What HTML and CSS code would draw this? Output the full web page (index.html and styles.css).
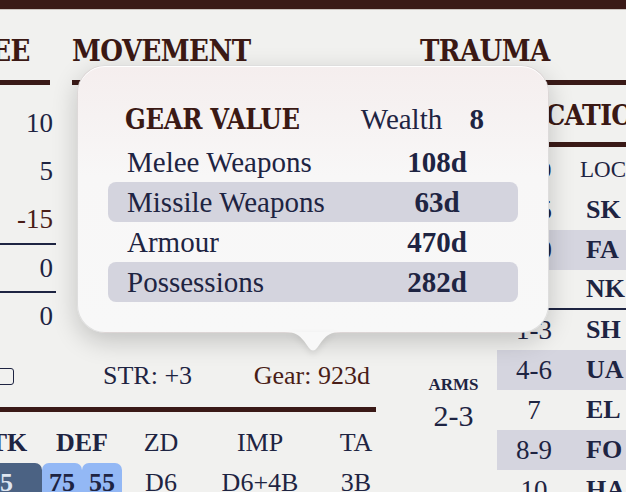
FILE: index.html
```html
<!DOCTYPE html>
<html lang="en">
<head>
    <meta charset="UTF-8">
    <meta name="viewport" content="width=device-width, initial-scale=1.0">
    <title>Character Sheet</title>
    <link rel="stylesheet" href="styles.css">
</head>
<body>
    <div class="topbar"></div>

    <main class="sheet">
        <!-- Melee modifiers -->
        <section class="panel melee">
            <h2 class="heading">MELEE</h2>
            <div class="bar"></div>
            <ul class="mods">
                <li><span class="mod-name">Skill</span><span>10</span></li>
                <li><span class="mod-name">Style</span><span>5</span></li>
                <li class="penalty"><span class="mod-name">Load</span><span>-15</span></li>
                <li><span class="mod-name">Bonus</span><span>0</span></li>
                <li><span class="mod-name">Total</span><span>0</span></li>
            </ul>
        </section>

        <section class="panel movement">
            <h2 class="heading">MOVEMENT</h2>
            <div class="bar"></div>
        </section>

        <!-- Trauma + hit location -->
        <section class="panel trauma">
            <h2 class="heading">TRAUMA</h2>
            <div class="bar"></div>
            <h3 class="subheading">HIT LOCATION</h3>
            <div class="bar"></div>
            <div class="hit-body">
                <div class="body-zones">
                    <div class="zone-label">ARMS</div>
                    <div class="zone-roll">2-3</div>
                </div>
                <div class="hit-table">
                    <div class="hit-row hit-head"><span>D10</span><span class="loc">LOCATION</span></div>
                    <div class="hit-row"><span>1-5</span><span class="loc">SK</span></div>
                    <div class="hit-row band"><span>6-9</span><span class="loc">FA</span></div>
                    <div class="hit-row split"><span>10</span><span class="loc">NK</span></div>
                    <div class="hit-row"><span>1-3</span><span class="loc">SH</span></div>
                    <div class="hit-row band"><span>4-6</span><span class="loc">UA</span></div>
                    <div class="hit-row"><span>7</span><span class="loc">EL</span></div>
                    <div class="hit-row band"><span>8-9</span><span class="loc">FO</span></div>
                    <div class="hit-row"><span>10</span><span class="loc">HA</span></div>
                </div>
            </div>
        </section>

        <!-- Strength, gear and weapons -->
        <section class="gear-panel">
            <div class="gear-line">
                <label class="shield">Shield <span class="check"></span></label>
                <span class="str">STR: +3</span>
                <span class="gear-total">Gear: 923d</span>
            </div>
            <div class="bar"></div>
            <div class="weapons">
                <span class="wh"></span>
                <span class="wh strong">ATK</span>
                <span class="wh strong def">DEF</span>
                <span class="wh">ZD</span>
                <span class="wh">IMP</span>
                <span class="wh">TA</span>

                <span class="wv name">Sword</span>
                <span class="wv atk">55</span>
                <span class="wv def-cell">75</span>
                <span class="wv def-cell">55</span>
                <span class="wv">D6</span>
                <span class="wv">D6+4B</span>
                <span class="wv">3B</span>

                <span class="wv name">Dagger</span>
                <span class="wv">40</span>
                <span class="wv">60</span>
                <span class="wv">45</span>
                <span class="wv">D4</span>
                <span class="wv">D4+2B</span>
                <span class="wv">1B</span>
            </div>
        </section>
    </main>

    <!-- Gear value popover -->
    <div class="tooltip">
        <div class="tip-head">
            <h3 class="tip-title">GEAR VALUE</h3>
            <span class="wealth">Wealth <b>8</b></span>
        </div>
        <div class="tip-row"><span>Melee Weapons</span><span class="cost">108d</span></div>
        <div class="tip-row alt"><span>Missile Weapons</span><span class="cost">63d</span></div>
        <div class="tip-row"><span>Armour</span><span class="cost">470d</span></div>
        <div class="tip-row alt"><span>Possessions</span><span class="cost">282d</span></div>
        <svg class="tip-arrow" width="56" height="21" viewBox="0 0 56 21">
            <path d="M0 0 C10 0 14 3 19 9 L24 16 Q28 21 32 16 L37 9 C42 3 46 0 56 0 Z" fill="#f8f8f8"/>
        </svg>
    </div>
</body>
</html>
```

FILE: styles.css
```css
* {
    box-sizing: border-box;
}
html, body {
    margin: 0;
    height: 100%;
}
body {
    font-family: "Liberation Serif", "DejaVu Serif", serif;
    background: #f1f1ef;
    color: #1e2442;
    overflow: hidden;
    position: relative;
}
.topbar {
    height: 10px;
    background: #3a1a17;
    border-bottom: 1px solid #cbc3c0;
}

/* sheet columns */
.sheet {
    display: grid;
    grid-template-columns: 140px 304px 260px;
    column-gap: 16px;
    margin-left: -84px;
    align-items: start;
}
.melee {
    grid-column: 1;
    grid-row: 1;
}
.movement {
    grid-column: 2;
    grid-row: 1;
}
.trauma {
    grid-column: 3;
    grid-row: 1 / span 2;
    margin-left: 18px;
}
.gear-panel {
    grid-column: 1 / 3;
    grid-row: 2;
}

.heading,
.subheading,
.tip-title {
    font-family: "DejaVu Serif Condensed", "DejaVu Serif", serif;
    font-stretch: condensed;
    font-weight: 700;
    color: #3b1914;
    line-height: 1;
    margin: 0;
    white-space: nowrap;
}
.heading {
    height: 70px;
    display: flex;
    align-items: flex-end;
    padding-bottom: 14px;
    font-size: 29px;
    letter-spacing: -0.6px;
}
.bar {
    height: 5px;
    background: #3a1a17;
}

/* melee */
.melee .heading {
    padding-left: 10px;
}
.melee .bar {
    margin-right: 6px;
}
.mods {
    list-style: none;
    margin: 14px 0 0;
    padding: 0;
    font-size: 27px;
}
.mods li {
    height: 48px;
    display: flex;
    justify-content: space-between;
    align-items: center;
    padding: 0 3px 0 10px;
}
.mods li:nth-child(n+4) {
    border-top: 2px solid #1e2442;
}
.mods .penalty {
    color: #4a1d17;
}

/* trauma / hit location */
.trauma .heading {
    padding-left: 10px;
}
.subheading {
    height: 57px;
    display: flex;
    align-items: flex-end;
    padding: 0 0 12px 36px;
    font-size: 28px;
    letter-spacing: -0.6px;
}
.hit-body {
    display: grid;
    grid-template-columns: 87px 1fr;
    margin-top: 3px;
}
.body-zones {
    text-align: center;
    padding-top: 226px;
}
.zone-label {
    font-size: 17px;
    font-weight: 700;
    line-height: 1;
}
.zone-roll {
    font-size: 30px;
    line-height: 1;
    margin-top: 8px;
}
.hit-row {
    display: grid;
    grid-template-columns: 74px 1fr;
    align-items: center;
    height: 40px;
    font-size: 27px;
}
.hit-row span:first-child {
    text-align: center;
}
.hit-row .loc {
    padding-left: 15px;
    font-weight: 700;
    font-size: 26px;
}
.hit-head .loc {
    font-weight: 400;
    font-size: 23px;
    padding-left: 9px;
}
.hit-head span:first-child {
    font-size: 20px;
}
.hit-row.band {
    background: #d5d5df;
}
.hit-row.split {
    border-bottom: 2px solid #1e2442;
}

/* gear line + weapons */
.gear-line {
    display: flex;
    align-items: center;
    height: 52px;
    margin-top: 11px;
    font-size: 26px;
}
.shield {
    width: 98px;
    display: flex;
    justify-content: flex-end;
    align-items: center;
    gap: 8px;
}
.check {
    width: 17px;
    height: 17px;
    border: 1.8px solid #1e2442;
    border-radius: 3px;
}
.str {
    margin-left: 89px;
}
.gear-total {
    margin-left: auto;
    margin-right: 6px;
    color: #4a1d17;
}
.gear-panel .bar {
    margin-top: 5px;
}
.weapons {
    display: grid;
    grid-template-columns: 42px 84px 40px 40px 78px 120px 72px;
    grid-template-rows: 36px 40px 40px;
    row-gap: 2px;
    margin-top: 13px;
    font-size: 26px;
    text-align: center;
}
.wh {
    line-height: 36px;
}
.wh.strong {
    font-weight: 700;
}
.wh.def {
    grid-column: span 2;
}
.wv {
    line-height: 40px;
}
.wv.name {
    text-align: left;
}
.wv.atk {
    background: #4b6283;
    color: #dfe6f1;
    font-weight: 700;
    border-radius: 0 7px 0 0;
}
.wv.def-cell {
    background: #93b8f5;
    font-weight: 700;
    border-radius: 7px 7px 0 0;
}

/* popover */
.tooltip {
    position: absolute;
    left: 77px;
    top: 65px;
    width: 472px;
    height: 268px;
    padding: 30px 30px 0;
    border-radius: 28px;
    background: linear-gradient(#f5eeee, #f6f2f2 50px, #f8f7f7 110px, #f8f8f8);
    border: 1px solid rgba(0, 0, 0, 0.1);
    box-shadow: inset 0 1px 0 #fff, 0 8px 26px rgba(0, 0, 0, 0.2);
    font-size: 29px;
}
.tip-head {
    height: 46px;
    display: flex;
    align-items: center;
    padding: 0 34px 0 17px;
}
.tip-title {
    font-size: 27px;
    letter-spacing: -0.3px;
}
.wealth {
    margin-left: auto;
    line-height: 1;
}
.wealth b {
    margin-left: 20px;
}
.tip-row {
    display: grid;
    grid-template-columns: 1fr 110px;
    align-items: center;
    height: 40px;
    padding: 0 26px 0 19px;
    border-radius: 8px;
    line-height: 1;
}
.tip-row.alt {
    background: #d4d4de;
}
.tip-row .cost {
    text-align: center;
    font-weight: 700;
}
.tip-arrow {
    position: absolute;
    top: 100%;
    left: calc(50% - 28px);
    display: block;
    filter: drop-shadow(0 3px 3px rgba(0, 0, 0, 0.1));
}
```
